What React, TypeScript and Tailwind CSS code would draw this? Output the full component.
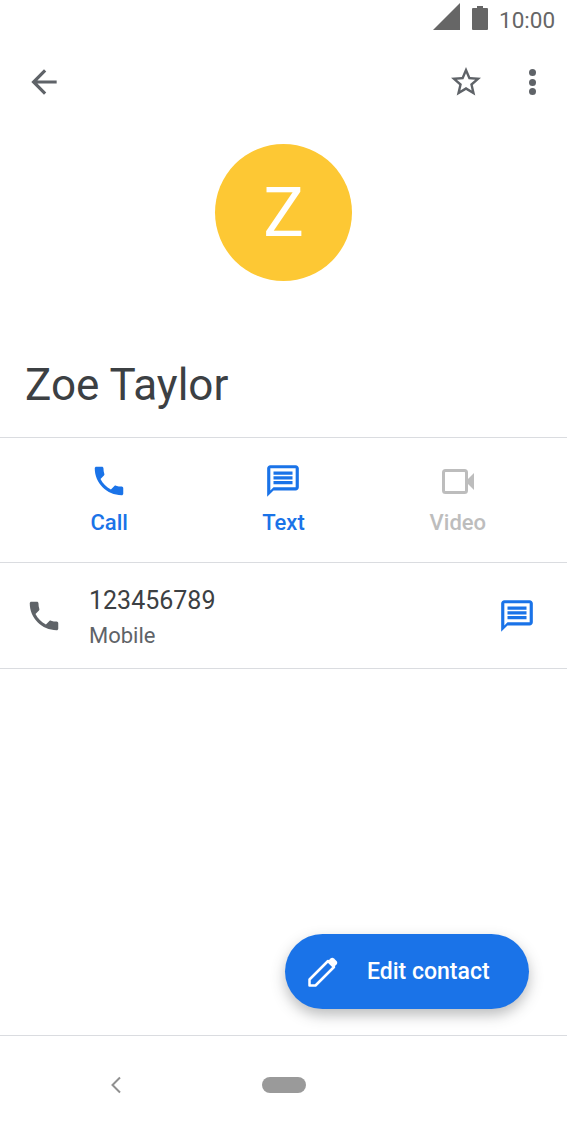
import type { ReactNode } from 'react'

const PHONE =
  'M6.62 10.79c1.44 2.83 3.76 5.14 6.59 6.59l2.2-2.2c.27-.27.67-.36 1.02-.24 1.12.37 2.33.57 3.57.57.55 0 1 .45 1 1V20c0 .55-.45 1-1 1-9.39 0-17-7.61-17-17 0-.55.45-1 1-1h3.5c.55 0 1 .45 1 1 0 1.25.2 2.45.57 3.57.11.35.03.74-.25 1.02l-2.2 2.2z'
const MESSAGE =
  'M20 2H4c-1.1 0-2 .9-2 2v18l4-4h14c1.1 0 2-.9 2-2V4c0-1.1-.9-2-2-2zm0 14H6l-2 2V4h16v12zM6 12h12v2H6zm0-3h12v2H6zm0-3h12v2H6z'
const STAR =
  'M22 9.24l-7.19-.62L12 2 9.19 8.63 2 9.24l5.46 4.73L5.82 21 12 17.27 18.18 21l-1.63-7.03L22 9.24zM12 15.4l-3.76 2.27 1-4.28-3.32-2.88 4.38-.38L12 6.1l1.71 4.04 4.38.38-3.32 2.88 1 4.28L12 15.4z'
const ARROW = 'M20 11H7.83l5.59-5.59L12 4l-8 8 8 8 1.41-1.41L7.83 13H20v-2z'

const Icon = ({ d, className }: { d: string; className: string }) => (
  <svg viewBox="0 0 24 24" fill="currentColor" className={className}>
    <path d={d} />
  </svg>
)

const StatusBar = () => (
  <div className="h-10 flex items-center justify-end text-[#666666]">
    <svg viewBox="0 0 27 27" fill="currentColor" className="w-[27px] h-[27px] mr-[12px] -mt-[7px]">
      <path d="M27 0v27H0z" />
    </svg>
    <svg viewBox="0 0 16 24" fill="currentColor" className="w-4 h-6 mr-[11px] -mt-1">
      <path d="M5 0h6v2h4a1 1 0 0 1 1 1v20a1 1 0 0 1-1 1H1a1 1 0 0 1-1-1V3a1 1 0 0 1 1-1h4z" />
    </svg>
    <span className="w-[55px] text-[22.500px] leading-none mr-[13px]">10:00</span>
  </div>
)

const Toolbar = () => (
  <div className="h-[84px] flex items-center text-[#5f6368]">
    <Icon d={ARROW} className="w-[38px] h-[38px] ml-[25px]" />
    <Icon d={STAR} className="w-9 h-9 ml-auto" />
    <div className="flex flex-col gap-[2.5px] ml-[45px] mr-[31px]">
      <div className="w-[7px] h-[7px] rounded-full bg-[#5f6368]" />
      <div className="w-[7px] h-[7px] rounded-full bg-[#5f6368]" />
      <div className="w-[7px] h-[7px] rounded-full bg-[#5f6368]" />
    </div>
  </div>
)

const ActionButton = ({ icon, label, color }: { icon: ReactNode; label: string; color: string }) => (
  <div className={`flex flex-col items-center ${color}`}>
    <div className="h-[38px] flex items-center">{icon}</div>
    <span className="mt-[9px] text-[22px] leading-[28px] font-medium">{label}</span>
  </div>
)

export default function App() {
  return (
    <div className="w-[567px] h-[1134px] bg-white flex flex-col font-['Roboto',sans-serif]">
      <StatusBar />
      <Toolbar />

      <div className="mt-5 flex justify-center">
        <div className="w-[137px] h-[137px] rounded-full bg-[#fdc834] flex items-center justify-center text-white text-[68px] leading-none">
          Z
        </div>
      </div>

      <h1 className="mt-[74px] px-[25px] text-[#3c4043] text-[44px] leading-[60px] h-[82px]">
        Zoe Taylor
      </h1>

      <div className="h-[126px] border-y border-[#dadce0] grid grid-cols-3 px-[22px] pt-[24px]">
        <ActionButton icon={<Icon d={PHONE} className="w-[38px] h-[38px]" />} label="Call" color="text-[#1a73e8]" />
        <ActionButton icon={<Icon d={MESSAGE} className="w-[38px] h-[38px]" />} label="Text" color="text-[#1a73e8]" />
        <ActionButton
          icon={
            <svg viewBox="0 0 32 25" className="w-8 h-[25px]">
              <rect x="1.5" y="1.5" width="23" height="22" rx="2" fill="none" stroke="currentColor" strokeWidth="3" />
              <path d="M26 10 32 4v17l-6-6z" fill="currentColor" />
            </svg>
          }
          label="Video"
          color="text-[#bdbdbd]"
        />
      </div>

      <div className="h-[106px] border-b border-[#dadce0] flex items-center pl-[25px] pr-[31px]">
        <Icon d={PHONE} className="w-[38px] h-[38px] text-[#5f6368]" />
        <div className="ml-[26px] pt-[5px] flex flex-col">
          <span className="text-[25px] leading-[34px] text-[#3c4043]">123456789</span>
          <span className="text-[22px] leading-[32px] mt-[2px] text-[#5f6368]">Mobile</span>
        </div>
        <Icon d={MESSAGE} className="w-[38px] h-[38px] ml-auto text-[#1a73e8]" />
      </div>

      <div className="flex-1 flex items-end justify-end pr-[38px] pb-[26px]">
        <div className="w-[244px] h-[75px] rounded-full bg-[#1a73e8] flex items-center pl-[23px] text-white shadow-[0_6px_14px_rgba(60,64,67,0.35)]">
          <svg viewBox="0 0 30 30" className="w-[30px] h-[30px]">
            <path
              d="M1.5 28.5v-6L20 4l6 6L7.5 28.5z"
              fill="none"
              stroke="currentColor"
              strokeWidth="2.5"
              strokeLinejoin="round"
            />
            <path d="M20.5 3.5l2-2c1-1 2.5-1 3.5 0l2.500 2.500c1 1 1 2.500 0 3.500l-2 2z" fill="currentColor" />
          </svg>
          <span className="ml-[29px] pt-[2px] text-[23px] font-medium">Edit contact</span>
        </div>
      </div>

      <div className="h-[99px] border-t border-[#dadce0] flex items-center">
        <svg viewBox="0 0 12 18" fill="none" stroke="#909090" strokeWidth="2" className="w-3 h-[18px] ml-[110px]">
          <path d="M10 1.500 2.500 9l7.500 7.500" />
        </svg>
        <div className="w-11 h-4 rounded-full bg-[#9a9a9a] ml-[140px]" />
      </div>
    </div>
  )
}
